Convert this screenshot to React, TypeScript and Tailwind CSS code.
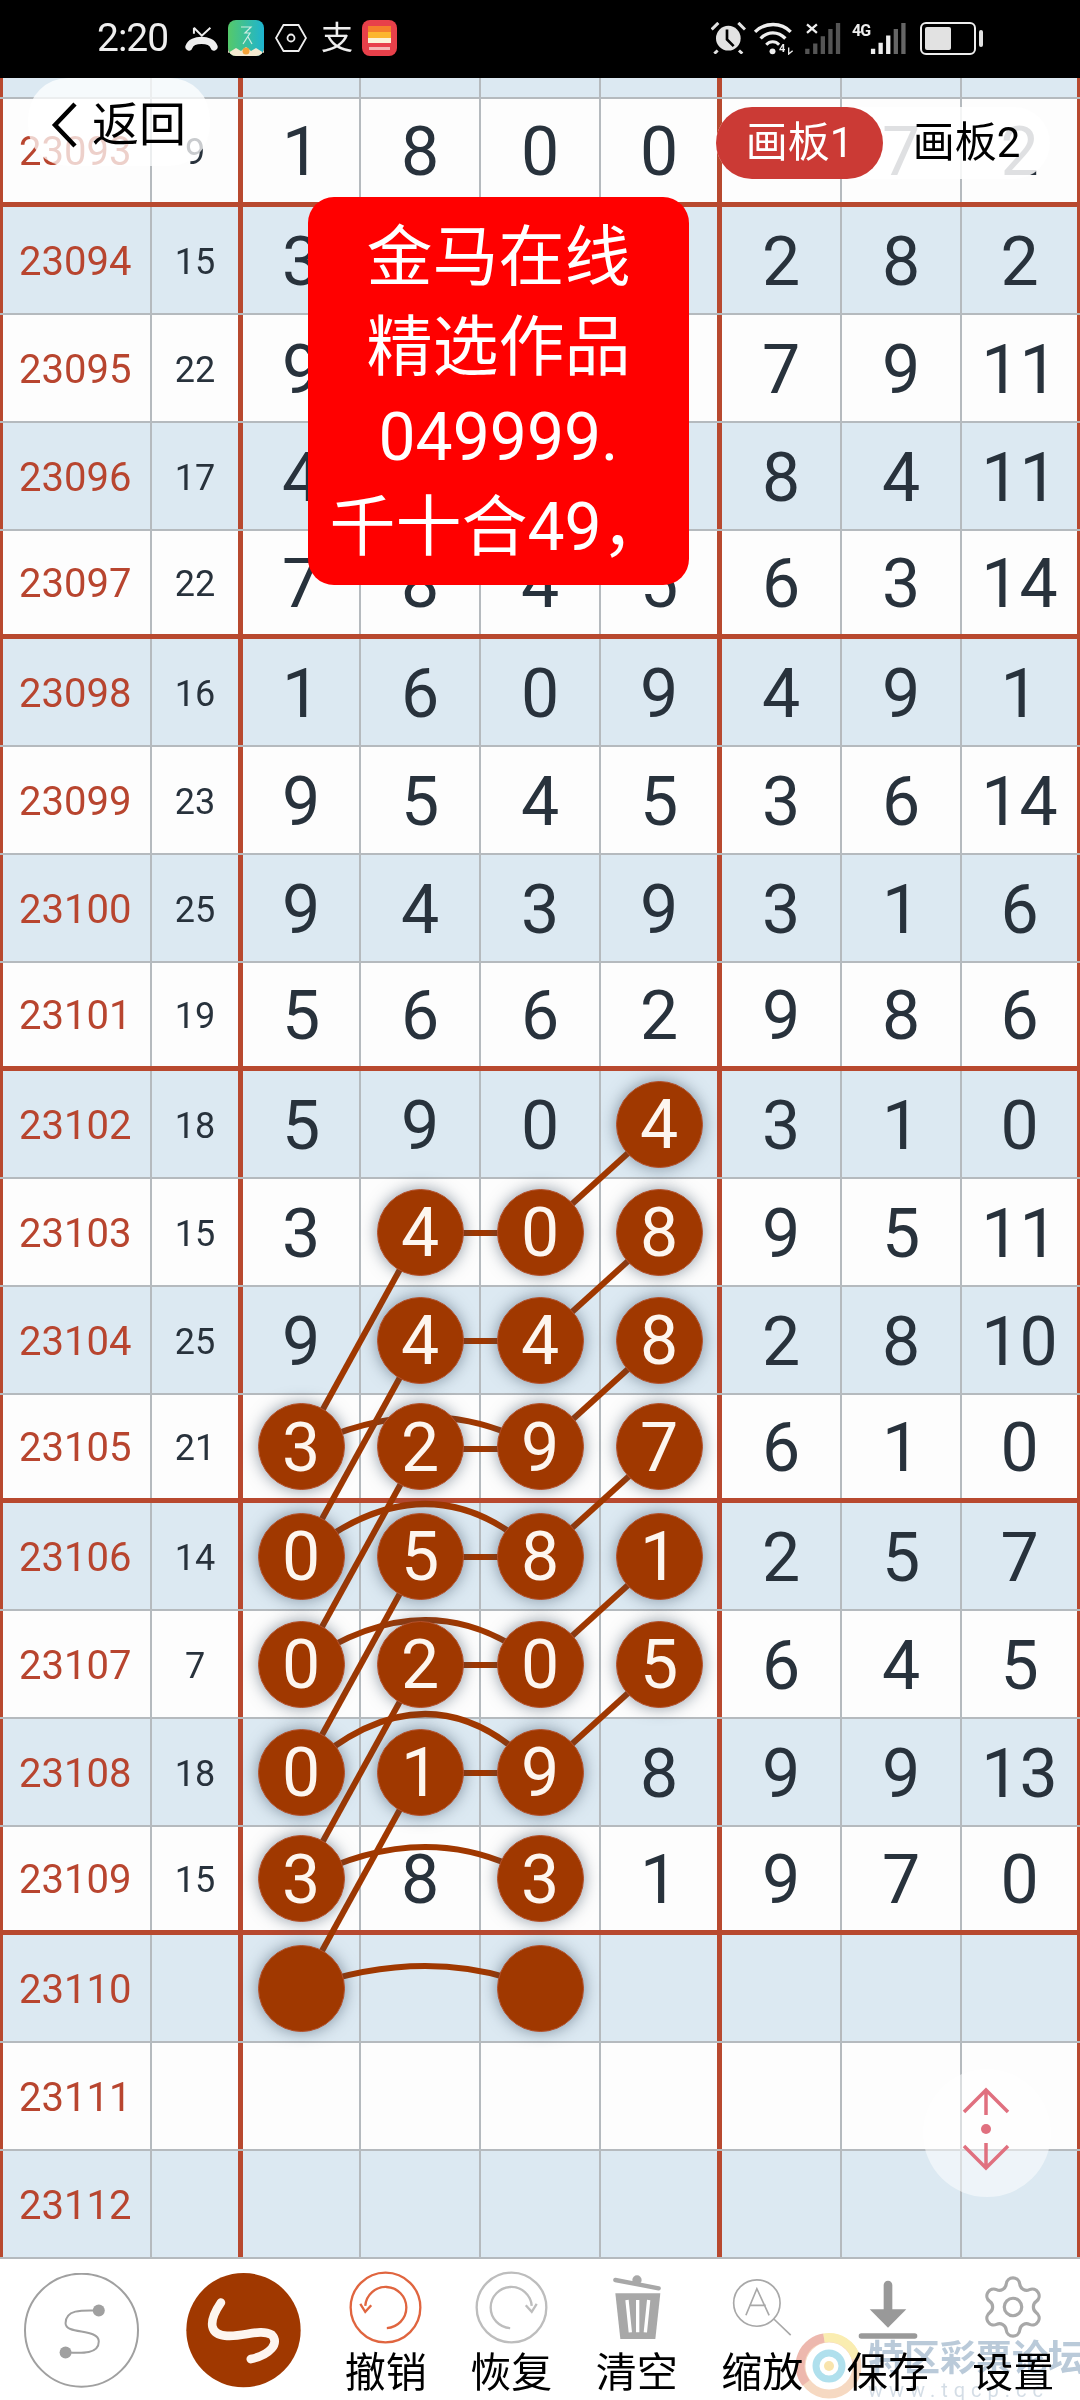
import { Settings } from "lucide-react";

const cols = [301, 420, 540, 659];
// centre of a table row in page pixels, 23093 is the first full row
const rowY = (id: number) => 153 + (id - 23093) * 108;
const pt = (id: number, col: number) => `${cols[col]} ${rowY(id)}`;

const rows: [number, string, string[], string[]][] = [
  [23093, "9", ["1", "8", "0", "0"], ["3", "7", "2"]],
  [23094, "15", ["3", "6", "2", "4"], ["2", "8", "2"]],
  [23095, "22", ["9", "1", "5", "7"], ["7", "9", "11"]],
  [23096, "17", ["4", "3", "0", "9"], ["8", "4", "11"]],
  [23097, "22", ["7", "8", "4", "5"], ["6", "3", "14"]],
  [23098, "16", ["1", "6", "0", "9"], ["4", "9", "1"]],
  [23099, "23", ["9", "5", "4", "5"], ["3", "6", "14"]],
  [23100, "25", ["9", "4", "3", "9"], ["3", "1", "6"]],
  [23101, "19", ["5", "6", "6", "2"], ["9", "8", "6"]],
  [23102, "18", ["5", "9", "0", "*4"], ["3", "1", "0"]],
  [23103, "15", ["3", "*4", "*0", "*8"], ["9", "5", "11"]],
  [23104, "25", ["9", "*4", "*4", "*8"], ["2", "8", "10"]],
  [23105, "21", ["*3", "*2", "*9", "*7"], ["6", "1", "0"]],
  [23106, "14", ["*0", "*5", "*8", "*1"], ["2", "5", "7"]],
  [23107, "7", ["*0", "*2", "*0", "*5"], ["6", "4", "5"]],
  [23108, "18", ["*0", "*1", "*9", "8"], ["9", "9", "13"]],
  [23109, "15", ["*3", "8", "*3", "1"], ["9", "7", "0"]],
  [23110, "", ["*", "", "*", ""], ["", "", ""]],
  [23111, "", ["", "", "", ""], ["", "", ""]],
  [23112, "", ["", "", "", ""], ["", "", ""]],
];

// [from row, from col, to row, to col]
const lines = [
  [23102, 3, 23103, 2],
  [23103, 2, 23103, 1],
  [23103, 1, 23105, 0],
  [23103, 3, 23104, 2],
  [23104, 2, 23104, 1],
  [23104, 1, 23106, 0],
  [23104, 3, 23105, 2],
  [23105, 2, 23105, 1],
  [23105, 1, 23107, 0],
  [23105, 3, 23106, 2],
  [23106, 2, 23106, 1],
  [23106, 1, 23108, 0],
  [23106, 3, 23107, 2],
  [23107, 2, 23107, 1],
  [23107, 1, 23109, 0],
  [23107, 3, 23108, 2],
  [23108, 2, 23108, 1],
  [23108, 1, 23110, 0],
];

// arcs between col 0 and col 2: [row, how far the top rises]
const arcs = [
  [23105, 32],
  [23106, 53],
  [23107, 45],
  [23108, 59],
  [23109, 34],
  [23110, 23],
];

function Cell({ value, className }: { value: string; className: string }) {
  const ball = value.startsWith("*");
  return (
    <div className={`flex h-full items-center justify-center ${className}`}>
      {ball ? (
        <div className="relative z-20 flex h-[87px] w-[87px] shrink-0 items-center justify-center rounded-full border-[1.5px] border-[#b5512c] bg-[#a03800] pt-[2px] text-[#fdf6ef] shadow-[0_0_16px_rgba(50,70,90,0.55)]">
          {value.slice(1)}
        </div>
      ) : (
        <span className="pt-[3px]">{value}</span>
      )}
    </div>
  );
}

function Row({ id, sum, left, right }: { id: number; sum: string; left: string[]; right: string[] }) {
  const blue = id % 2 === 0;
  const thick = (id - 23093) % 4 === 0 && id < 23110;
  return (
    <div
      className={`flex h-[108px] text-[68px] leading-none text-[#28323c] ${blue ? "bg-[#dce9f2]" : "bg-[#fdfdfd]"} ${
        thick ? "border-b-[5px] border-[#b8492f]" : "border-b-2 border-[#b5babe]"
      }`}
    >
      <div className="flex h-full w-[152px] items-center border-l-[3px] border-r-2 border-l-[#b8492f] border-r-[#b5babe] pl-[16px] pt-[3px] text-[40px] text-[#b8452f]">
        {id}
      </div>
      <div className="flex h-full w-[91px] items-center justify-center border-r-[5px] border-[#b8492f] pt-[3px] text-[36px]">
        {sum}
      </div>
      <Cell value={left[0]} className="w-[118px] border-r-2 border-[#b5babe]" />
      <Cell value={left[1]} className="w-[120px] border-r-2 border-[#b5babe]" />
      <Cell value={left[2]} className="w-[120px] border-r-2 border-[#b5babe]" />
      <Cell value={left[3]} className="w-[121px] border-r-[5px] border-[#b8492f]" />
      <Cell value={right[0]} className="w-[120px] border-r-2 border-[#b5babe]" />
      <Cell value={right[1]} className="w-[120px] border-r-2 border-[#b5babe]" />
      <Cell value={right[2]} className="w-[118px] border-r-[3px] border-[#b8492f]" />
    </div>
  );
}

function StatusBar() {
  return (
    <div className="flex h-[78px] items-center bg-black pb-[2px] pl-[97px] text-[#eeeeee]">
      <span className="w-[73px] text-[39px] leading-none tracking-[-1px]">2:20</span>
      <svg viewBox="285 55 100 75" className="ml-[15px] h-[25px] w-[33px]" fill="none" stroke="#eee">
        <path d="M312 60 L336 84 L362 60 M312 60 V78" strokeWidth="6" />
        <path d="M297 118 C305 92 365 92 373 118" strokeWidth="22" strokeLinecap="round" />
      </svg>
      <svg viewBox="0 0 36 36" className="ml-[10px] h-[36px] w-[36px]">
        <defs>
          <linearGradient id="app" x1="0" y1="0" x2="1" y2="0">
            <stop offset="0" stopColor="#55c96a" />
            <stop offset="1" stopColor="#1eb4d0" />
          </linearGradient>
        </defs>
        <rect width="36" height="36" rx="8" fill="url(#app)" />
        <path d="M13 7 H23 L17 13 H22 L15 24 M20 17 L24 24" fill="none" stroke="#cfeee0" strokeWidth="1.2" />
        <path d="M0 33 L8 28 L13 31 L18 27 L23 31 L28 28 L36 33 V28 A8 8 0 0 1 28 36 H8 A8 8 0 0 1 0 28 Z" fill="#f5e9d0" />
        <circle cx="18" cy="31" r="3.5" fill="#f3a33a" />
      </svg>
      <svg viewBox="0 0 32 30" className="ml-[11px] h-[30px] w-[32px]" fill="none" stroke="#eee" strokeWidth="1.8">
        <path d="M8.5 2 H23.5 L31 15 L23.5 28 H8.5 L1 15 Z" />
        <circle cx="16" cy="15" r="3.5" />
      </svg>
      <span className="ml-[14px] w-[32px] text-[32px] leading-none">支</span>
      <svg viewBox="0 0 35 36" className="ml-[9px] h-[36px] w-[35px]">
        <rect width="35" height="36" rx="8" fill="#e8404a" />
        <rect x="6" y="6" width="23" height="6" fill="#f57f2c" />
        <rect x="6" y="12" width="23" height="6" fill="#fcb62e" />
        <rect x="6" y="18" width="23" height="5" fill="#fbf3d8" />
        <rect x="7" y="27" width="21" height="3" fill="#f5b7b4" />
      </svg>
      <div className="ml-auto mr-[97px] flex items-center">
        <svg viewBox="40 40 105 95" className="h-[32px] w-[35px]">
          <circle cx="92" cy="88" r="37" fill="#e2e2e2" />
          <path d="M88 62 V92 L108 112" fill="none" stroke="#000" strokeWidth="8" />
          <path d="M42 62 L62 42 M142 62 L122 42 M60 125 L50 134 M124 125 L134 134" stroke="#e2e2e2" strokeWidth="9" />
        </svg>
        <div className="relative ml-[7px] h-[33px] w-[42px]">
          <svg viewBox="175 35 125 100" className="h-full w-full" fill="none" stroke="#eee">
            <path d="M180 65 C210 35 260 35 288 65" strokeWidth="10" />
            <path d="M197 85 C218 62 250 62 272 85" strokeWidth="10" />
            <path d="M214 104 C225 92 242 92 253 104" strokeWidth="9" />
            <circle cx="233" cy="124" r="9" fill="#eee" stroke="none" />
            <path d="M282 112 V132 L294 122" strokeWidth="4" />
          </svg>
          <span className="absolute left-[26px] top-[21px] text-[11px] font-bold leading-none">4</span>
        </div>
        <svg viewBox="320 35 110 100" className="ml-[10px] h-[33px] w-[37px]">
          <path d="M325 42 L355 68 M355 42 L325 68" stroke="#eee" strokeWidth="7" />
          <path d="M326 132 V116 M350 132 V100 M373 132 V78 M396 132 V56 M419 132 V38" stroke="#555" strokeWidth="13" />
        </svg>
        <div className="relative ml-[10px] h-[33px] w-[55px]">
          <span className="absolute left-0 top-[1px] text-[16px] font-bold leading-none tracking-[-1px]">4G</span>
          <svg viewBox="460 35 165 100" className="h-full w-full">
            <path d="M523 132 V116 M546 132 V98 M569 132 V76" stroke="#eee" strokeWidth="13" />
            <path d="M592 132 V56 M615 132 V38" stroke="#666" strokeWidth="13" />
          </svg>
        </div>
        <div className="ml-[13px] flex h-[33px] w-[56px] items-center rounded-[6px] border-2 border-[#eee] p-[3px]">
          <div className="h-full w-[26px] rounded-[2px] bg-[#e2e2e2]" />
        </div>
        <div className="ml-[3px] h-[17px] w-[4px] rounded-full bg-[#e2e2e2]" />
      </div>
    </div>
  );
}

function Chart() {
  return (
    <svg viewBox="0 78 1080 2181" className="absolute left-0 top-0 z-10 h-[2181px] w-[1080px]" fill="none" stroke="#a03800" strokeWidth="6">
      {lines.map(([a, b, c, d], i) => (
        <path key={i} d={`M${pt(a, b)} L${pt(c, d)}`} />
      ))}
      {arcs.map(([id, h]) => (
        <path key={id} d={`M${cols[0]} ${rowY(id)} Q430 ${rowY(id) - h * 2} ${cols[2]} ${rowY(id)}`} />
      ))}
    </svg>
  );
}

function Tool({ label, children }: { label: string; children: React.ReactNode }) {
  return (
    <div className="flex w-[125.5px] flex-col items-center">
      <div className="flex h-[72px] items-center justify-center">{children}</div>
      <span className="mt-[5px] text-[41px] leading-[50px] text-black">{label}</span>
    </div>
  );
}

function ArcIcon({ className }: { className: string }) {
  return (
    <svg viewBox="1048 23 220 220" className={`h-[73px] w-[73px] ${className}`} fill="none" stroke="currentColor" strokeWidth="7">
      <circle cx="1158" cy="133" r="105" />
      <path d="M1162 195 A62 62 0 1 0 1097 128" />
      <path d="M1082 122 L1097 146 L1115 126" />
    </svg>
  );
}

function BottomBar() {
  return (
    <div className="flex h-[141px] items-start bg-white pl-[24px] pt-[12px] shadow-[0_-1px_3px_rgba(0,0,0,0.15)]">
      <svg viewBox="70 39 346 346" className="mt-[2px] h-[115px] w-[115px]" fill="none" stroke="#a0a0a0" strokeWidth="6">
        <circle cx="243" cy="211" r="170" />
        <path d="M295 152 C240 150 195 150 195 190 C195 225 295 205 295 245 C295 285 240 280 195 278" />
        <circle cx="295" cy="152" r="18" fill="#a0a0a0" stroke="none" />
        <circle cx="195" cy="278" r="18" fill="#a0a0a0" stroke="none" />
      </svg>
      <svg viewBox="557 39 346 346" className="ml-[47px] mt-[2px] h-[115px] w-[115px]" fill="none">
        <circle cx="730" cy="211" r="172" fill="#a03800" />
        <path d="M662 128 C620 190 630 225 680 228 C730 232 780 205 815 225 C840 250 810 285 752 298" stroke="#fdf5ef" strokeWidth="26" strokeLinecap="round" />
      </svg>
      <div className="ml-[22px] flex">
        <Tool label="撤销">
          <ArcIcon className="text-[#e0653f]" />
        </Tool>
        <Tool label="恢复">
          <ArcIcon className="-scale-x-100 text-[#bdbdbd]" />
        </Tool>
        <Tool label="清空">
          <svg viewBox="35 40 150 195" className="h-[65px] w-[50px]">
            <path d="M45 55 L175 80" stroke="#a8a8a8" strokeWidth="13" strokeLinecap="round" />
            <circle cx="110" cy="55" r="14" fill="#a8a8a8" />
            <path d="M45 95 H180 L165 232 H60 Z" fill="#a8a8a8" />
            <path d="M80 115 L90 212 M112 115 V212 M145 115 L135 212" stroke="#fff" strokeWidth="10" />
          </svg>
        </Tool>
        <Tool label="缩放">
          <svg viewBox="400 45 190 180" className="h-[60px] w-[63px]" fill="none" stroke="#a8a8a8" strokeWidth="5">
            <circle cx="478" cy="123" r="70" />
            <path d="M445 160 L478 80 L515 160 M455 130 H505 M530 172 L580 220" />
          </svg>
        </Tool>
        <Tool label="保存">
          <svg viewBox="775 45 180 180" className="mt-[6px] h-[60px] w-[60px]">
            <path d="M865 60 V135" stroke="#999" strokeWidth="26" strokeLinecap="round" />
            <path d="M810 133 H920 L865 188 Z" fill="#999" />
            <path d="M785 213 H945" stroke="#999" strokeWidth="16" strokeLinecap="round" />
          </svg>
        </Tool>
        <Tool label="设置">
          <Settings size={70} strokeWidth={1.1} color="#a8a8a8" />
        </Tool>
      </div>
    </div>
  );
}

export default function App() {
  return (
    <div className="relative h-[2400px] w-[1080px] overflow-hidden bg-white font-[family-name:Roboto,'Noto_Sans_CJK_SC',sans-serif]">
      <StatusBar />
      <div className="relative">
        <div className="flex h-[21px] border-b-2 border-[#b5babe] bg-[#dce9f2]">
          <div className="w-[152px] border-l-[3px] border-r-2 border-l-[#b8492f] border-r-[#b5babe]" />
          <div className="w-[91px] border-r-[5px] border-[#b8492f]" />
          <div className="w-[118px] border-r-2 border-[#b5babe]" />
          <div className="w-[120px] border-r-2 border-[#b5babe]" />
          <div className="w-[120px] border-r-2 border-[#b5babe]" />
          <div className="w-[121px] border-r-[5px] border-[#b8492f]" />
          <div className="w-[120px] border-r-2 border-[#b5babe]" />
          <div className="w-[120px] border-r-2 border-[#b5babe]" />
          <div className="w-[118px] border-r-[3px] border-[#b8492f]" />
        </div>
        {rows.map(([id, sum, left, right]) => (
          <Row key={id} id={id} sum={sum} left={left} right={right} />
        ))}
        <Chart />
      </div>
      <BottomBar />

      <div className="absolute left-[28px] top-[78px] z-30 flex h-[88px] w-[182px] items-center rounded-[40px] bg-white/75 pl-[22px] pt-[6px] text-[47px] text-black">
        <svg viewBox="0 0 28 46" className="mr-[14px] h-[46px] w-[28px]" fill="none" stroke="#000" strokeWidth="4.5">
          <path d="M25 2 L5 23 L25 44" />
        </svg>
        返回
      </div>

      <div className="absolute left-[716px] top-[107px] z-30 flex h-[72px] w-[334px] items-center rounded-[36px] bg-white/85 text-[42px] leading-none">
        <span className="flex h-full w-[167px] items-center justify-center rounded-[36px] bg-[#cb3a35] text-white">画板1</span>
        <span className="flex h-full w-[167px] items-center justify-center text-black">画板2</span>
      </div>

      <div className="absolute left-[308px] top-[197px] z-30 w-[381px] rounded-[26px] bg-[#ff0000] pb-[12px] pt-[16px] text-center text-[66px] leading-[90px] text-white">
        <div>金马在线</div>
        <div>精选作品</div>
        <div>049999.</div>
        <div className="whitespace-nowrap">千十合49，</div>
      </div>

      <div className="absolute left-[923px] top-[2069px] z-30 h-[128px] w-[128px] rounded-full bg-white/50">
        <svg viewBox="0 0 128 128" className="h-full w-full" fill="none" stroke="#e0707f" strokeWidth="3.5">
          <path d="M41 43 L63 21 L85 43 M63 21 V46 M41 77 L63 99 L85 77 M63 74 V99" />
          <circle cx="63" cy="60" r="5" fill="#e0707f" stroke="none" />
        </svg>
      </div>

      <div className="absolute left-[796px] top-[2333px] z-30 flex h-[67px] w-[284px] opacity-70 mix-blend-multiply">
        <svg viewBox="0 0 66 66" className="h-[66px] w-[66px] shrink-0" fill="none">
          <circle cx="33" cy="33" r="28" stroke="#f3c9a8" strokeWidth="9" />
          <path d="M10 50 A28 28 0 0 1 28 5" stroke="#e69a8c" strokeWidth="9" />
          <path d="M28 5 A28 28 0 0 1 60 25" stroke="#f8e690" strokeWidth="9" />
          <circle cx="33" cy="33" r="13" stroke="#8fd3e6" strokeWidth="7" />
          <circle cx="33" cy="33" r="5" fill="#f6d98a" />
        </svg>
        <div className="ml-[6px] pt-[5px] text-[36px] font-bold leading-[42px] whitespace-nowrap text-[#9db4c9]">
          特区彩票论坛
          <div className="text-[20px] leading-[20px] font-normal tracking-[6px] text-[#c2cfdb]">www.tqcp.cc</div>
        </div>
      </div>
    </div>
  );
}
